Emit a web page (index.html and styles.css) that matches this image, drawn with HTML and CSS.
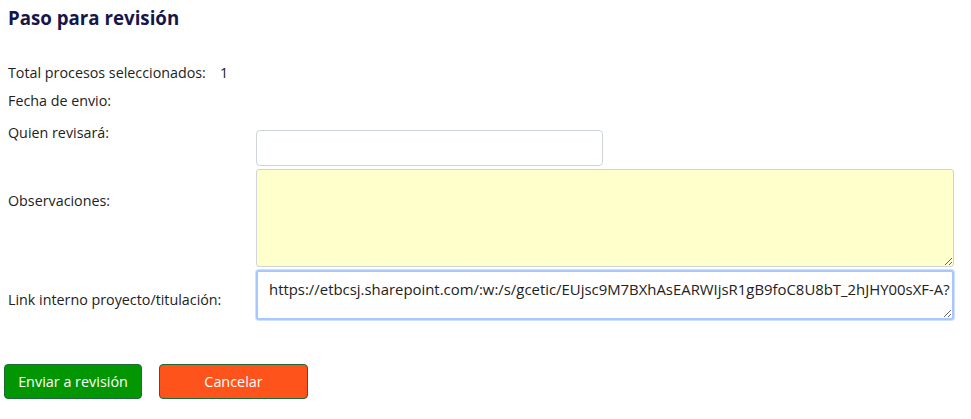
FILE: index.html
```html
<!DOCTYPE html>
<html>
<head>
<meta charset="utf-8">
<link rel="stylesheet" href="styles.css">
</head>
<body>
<div class="page">
  <h1 class="title">Paso para revisión</h1>
  <div class="info">
    <div class="info-row"><span class="info-label">Total procesos seleccionados:</span><span class="info-val">1</span></div>
    <div class="info-row"><span class="info-label">Fecha de envio:</span></div>
  </div>
  <div class="form">
    <div class="row row-quien">
      <label class="lbl lbl-quien">Quien revisará:</label>
      <input class="txt" type="text">
    </div>
    <div class="row row-obs">
      <label class="lbl lbl-obs">Observaciones:</label>
      <textarea class="area area-obs"></textarea>
    </div>
    <div class="row row-link">
      <label class="lbl lbl-link">Link interno proyecto/titulación:</label>
      <textarea class="area area-link">https://etbcsj.sharepoint.com/:w:/s/gcetic/EUjsc9M7BXhAsEARWIjsR1gB9foC8U8bT_2hJHY00sXF-A?</textarea>
    </div>
  </div>
  <div class="actions">
    <button class="btn btn-send">Enviar a revisión</button>
    <button class="btn btn-cancel">Cancelar</button>
  </div>
</div>
</body>
</html>
```
FILE: styles.css
```css
* { box-sizing: border-box; }
body {
  margin: 0;
  font-family: "Open Sans", "Noto Sans", sans-serif;
  font-size: 14.3px;
  color: #222;
  background: #fff;
}
.page { padding: 0 0 0 8px; }
.title {
  margin: 0;
  padding-top: 5px;
  font-size: 18.7px;
  font-weight: 700;
  color: #16164a;
  line-height: 26px;
  height: 59px;
}
.info-row { height: 28px; line-height: 28px; }
.info-label { display: inline-block; width: 212px; }
.form { margin-top: 8px; }
.row { display: flex; align-items: flex-start; margin-bottom: 3px; }
.lbl { width: 248px; flex: none; line-height: 20px; }
.row-quien { height: 43px; }
.lbl-quien { padding-top: 0; }
.lbl-obs { padding-top: 22px; }
.lbl-link { padding-top: 20px; }
.txt {
  width: 347px;
  height: 36px;
  border: 1px solid #cfd3da;
  border-radius: 4px;
  margin-top: 7px;
  background: #fff;
}
.area {
  width: 698px;
  border: 1px solid #cfd3da;
  border-radius: 3px;
  font-family: "Open Sans", "Noto Sans", sans-serif;
  color: #222;
  resize: both;
}
.area-obs { height: 98px; background: #ffffcc; }
.area-link {
  height: 50px;
  padding: 5px 11px 3px;
  font-size: 14.9px;
  line-height: 24px;
  overflow: hidden;
  white-space: nowrap;
  border: 2px solid #a6c8ff;
  box-shadow: 0 0 0 1px #cfe0ff;
  outline: none;
  background: #fff;
}
.actions { margin-top: 44px; display: flex; gap: 17px; margin-left: -4px; }
.btn {
  height: 35px;
  border: 1px solid #1e6b3a;
  border-radius: 4px;
  color: #fff;
  font-family: "Open Sans", "Noto Sans", sans-serif;
  font-size: 14.4px;
}
.btn-send { width: 138px; background: #029602; }
.btn-cancel { width: 149px; background: #fe531b; }
```
